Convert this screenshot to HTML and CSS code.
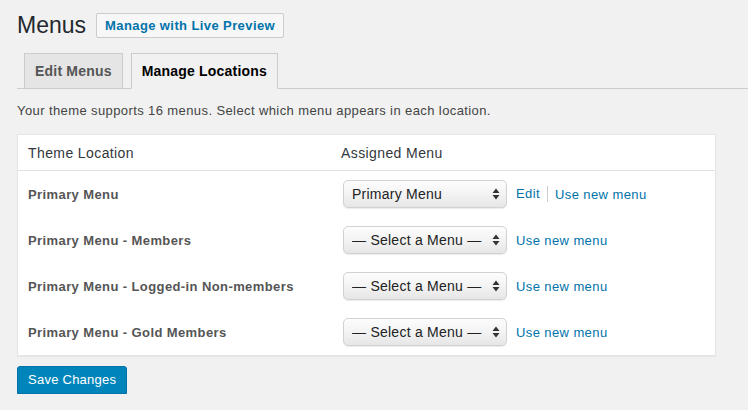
FILE: index.html
```html
<!DOCTYPE html>
<html lang="en">
<head>
    <meta charset="UTF-8">
    <title>Menus</title>
    <link rel="stylesheet" href="styles.css">
</head>
<body>
  <div class="wrap">
    <div class="page-head">
      <h1>Menus</h1>
      <a href="#" class="title-action">Manage with Live Preview</a>
    </div>

    <nav class="nav-tabs">
      <a href="#" class="nav-tab">Edit Menus</a>
      <a href="#" class="nav-tab active">Manage Locations</a>
    </nav>

    <p class="intro">Your theme supports 16 menus. Select which menu appears in each location.</p>

    <div class="locations">
      <div class="loc-row loc-head">
        <div class="loc-name">Theme Location</div>
        <div class="loc-menu">Assigned Menu</div>
      </div>

      <div class="loc-row">
        <div class="loc-name">Primary Menu</div>
        <div class="loc-menu">
          <span class="select-wrap">
            <select><option>Primary Menu</option></select>
            <svg class="arrows" width="8" height="12" viewBox="0 0 8 12"><path d="M4 0.5L7.5 5H0.5Z M4 11.5L7.5 7H0.5Z" fill="#333"/></svg>
          </span>
          <span class="actions"><a href="#" class="edit">Edit</a><a href="#">Use new menu</a></span>
        </div>
      </div>

      <div class="loc-row">
        <div class="loc-name">Primary Menu - Members</div>
        <div class="loc-menu">
          <span class="select-wrap">
            <select><option>— Select a Menu —</option></select>
            <svg class="arrows" width="8" height="12" viewBox="0 0 8 12"><path d="M4 0.5L7.5 5H0.5Z M4 11.5L7.5 7H0.5Z" fill="#333"/></svg>
          </span>
          <span class="actions"><a href="#">Use new menu</a></span>
        </div>
      </div>

      <div class="loc-row">
        <div class="loc-name">Primary Menu - Logged-in Non-members</div>
        <div class="loc-menu">
          <span class="select-wrap">
            <select><option>— Select a Menu —</option></select>
            <svg class="arrows" width="8" height="12" viewBox="0 0 8 12"><path d="M4 0.5L7.5 5H0.5Z M4 11.5L7.5 7H0.5Z" fill="#333"/></svg>
          </span>
          <span class="actions"><a href="#">Use new menu</a></span>
        </div>
      </div>

      <div class="loc-row">
        <div class="loc-name">Primary Menu - Gold Members</div>
        <div class="loc-menu">
          <span class="select-wrap">
            <select><option>— Select a Menu —</option></select>
            <svg class="arrows" width="8" height="12" viewBox="0 0 8 12"><path d="M4 0.5L7.5 5H0.5Z M4 11.5L7.5 7H0.5Z" fill="#333"/></svg>
          </span>
          <span class="actions"><a href="#">Use new menu</a></span>
        </div>
      </div>
    </div>

    <button class="button-primary">Save Changes</button>
  </div>
</body>
</html>
```

FILE: styles.css
```css
body {
    margin: 0;
    background: #f1f1f1;
    font-family: "Liberation Sans", Arial, sans-serif;
    font-size: 13px;
    letter-spacing: 0.4px;
    color: #444;
}

.wrap {
    padding: 13px 32px 0 17px;
}

/* title + live preview button */
.page-head {
    display: flex;
    align-items: center;
    height: 25px;
}

h1 {
    margin: 0 10px 0 0;
    font-size: 23px;
    font-weight: 400;
    line-height: 25px;
    letter-spacing: 0;
    color: #23282d;
}

.title-action {
    display: block;
    padding: 0 8px;
    height: 23px;
    line-height: 23px;
    border: 1px solid #ccc;
    border-radius: 2px;
    background: #f7f7f7;
    color: #0073aa;
    font-weight: 700;
    font-size: 13px;
    text-decoration: none;
}

/* tabs */
.nav-tabs {
    display: flex;
    gap: 8px;
    margin: 15px -32px 0 0;
    padding-left: 7px;
    border-bottom: 1px solid #ccc;
}

.nav-tab {
    display: block;
    padding: 5px 10px;
    line-height: 24px;
    font-size: 14px;
    font-weight: 700;
    letter-spacing: 0.2px;
    color: #555;
    background: #e5e5e5;
    border: 1px solid #ccc;
    border-bottom: none;
    text-decoration: none;
}

.nav-tab.active {
    background: #f1f1f1;
    color: #000;
    margin-bottom: -1px;
    border-bottom: 1px solid #f1f1f1;
}

.intro {
    margin: 12px 0 13px;
    line-height: 20px;
}

/* locations table */
.locations {
    background: #fff;
    border: 1px solid #e5e5e5;
    box-shadow: 0 1px 1px rgba(0,0,0,0.04);
}

.loc-row {
    display: grid;
    grid-template-columns: 313px 1fr;
    align-items: center;
    height: 46px;
    padding-left: 10px;
}

.loc-head {
    height: 35px;
    border-bottom: 1px solid #e1e1e1;
    font-size: 14px;
    color: #32373c;
}

.loc-name {
    font-weight: 700;
    color: #555;
}

.loc-head .loc-name {
    font-weight: 400;
    color: #32373c;
}

.loc-menu {
    display: flex;
    align-items: center;
}

.select-wrap {
    position: relative;
    display: block;
    margin-left: 2px;
}

select {
    appearance: none;
    -webkit-appearance: none;
    display: block;
    width: 164px;
    height: 28px;
    padding: 0 0 0 8px;
    border: 1px solid #d2d2d2;
    border-radius: 5px;
    background: linear-gradient(#fdfdfd, #f3f3f3 50%, #e6e6e6);
    box-shadow: 0 1px 1px rgba(0,0,0,0.08);
    font-family: "Liberation Sans", Arial, sans-serif;
    font-size: 14px;
    letter-spacing: 0.25px;
    color: #222;
}

.arrows {
    position: absolute;
    right: 7px;
    top: 8px;
    pointer-events: none;
}

.actions {
    margin-left: 9px;
    display: flex;
    align-items: center;
}

.actions a {
    color: #0073aa;
    text-decoration: none;
    font-size: 13px;
}

.actions a.edit {
    padding-right: 7px;
    margin-right: 7px;
    border-right: 1px solid #ccc;
    line-height: 16px;
}

.button-primary {
    display: block;
    margin-top: 10px;
    height: 28px;
    padding: 0 10px;
    border: 1px solid #0073aa;
    border-radius: 3px;
    background: #0085ba;
    box-shadow: 0 1px 0 #006799;
    color: #fff;
    font-family: "Liberation Sans", Arial, sans-serif;
    font-size: 13px;
    letter-spacing: 0.25px;
    line-height: 26px;
    cursor: pointer;
}
```
